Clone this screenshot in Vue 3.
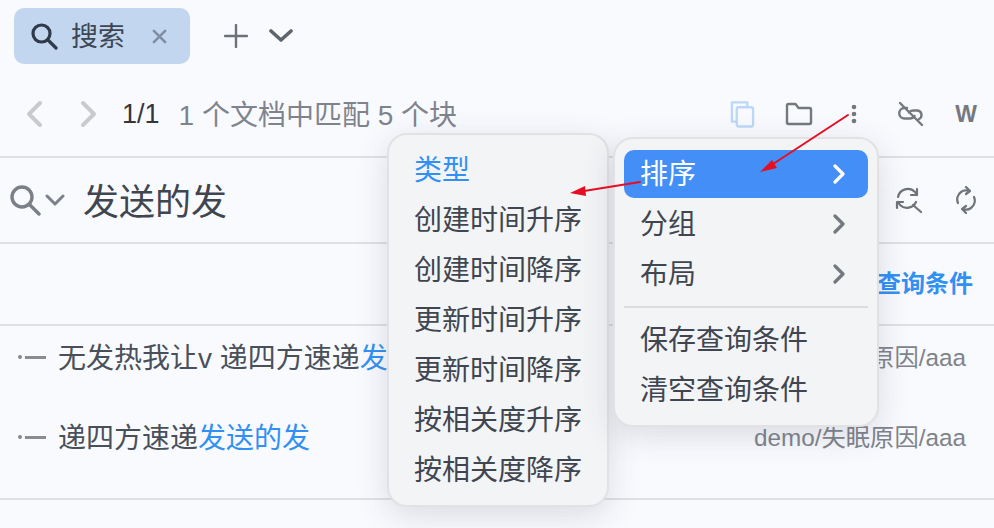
<template>
  <div class="page">
    <div class="tabbar">
      <div class="tab">
        <svg class="tab-search" viewBox="0 0 28 28"><circle cx="11.5" cy="11.5" r="8.5" /><path d="M18 18l8 8" /></svg>
        <span class="tab-title">搜索</span>
        <svg class="tab-close" viewBox="0 0 16 16"><path d="M2 2l12 12M14 2L2 14" /></svg>
      </div>
      <svg class="tab-add" viewBox="0 0 24 24"><path d="M12 1v22M1 12h22" /></svg>
      <svg class="tab-more" viewBox="0 0 24 16"><path d="M2 3l10 9 10-9" /></svg>
    </div>

    <div class="toolbar">
      <svg class="nav-arrow" viewBox="0 0 20 28"><path d="M16 3L5 14l11 11" /></svg>
      <svg class="nav-arrow next" viewBox="0 0 20 28"><path d="M4 3l11 11L4 25" /></svg>
      <span class="count">1/1</span>
      <span class="summary">1 个文档中匹配 5 个块</span>
      <div class="tools">
        <svg class="tool copy" viewBox="0 0 26 28"><path d="M6 22H2V2h16v4" /><rect x="7" y="7" width="17" height="20" rx="2" /></svg>
        <svg class="tool folder" viewBox="0 0 28 24"><path d="M2 3.500C2 2.500 2.500 2 3.500 2h7l3 4h11c1 0 1.500.5 1.500 1.500v13c0 1-.5 1.500-1.500 1.500h-21c-1 0-1.500-.5-1.500-1.500z" /></svg>
        <svg class="tool dots" viewBox="0 0 6 20"><circle cx="3" cy="3" r="2.300" /><circle cx="3" cy="10" r="2.300" /><circle cx="3" cy="17" r="2.300" /></svg>
        <svg class="tool unlink" viewBox="0 0 26 26"><path d="M9 7H6.500a5 5 0 0 0 0 10.500H12c2 0 3.500-1 4.500-2.500M11 11.500c1-1.500 2.500-2 4-2h4.500a4.500 4.500 0 0 1 1.500 8.500M2 2l22 22" /></svg>
        <span class="word">W</span>
      </div>
    </div>

    <div class="search-row">
      <svg class="query-icon" viewBox="0 0 32 32"><circle cx="13" cy="13" r="10" /><path d="M21 21l9 9" /></svg>
      <svg class="query-caret" viewBox="0 0 20 12"><path d="M2 2l8 8 8-8" /></svg>
      <span class="query">发送的发</span>
      <div class="row-tools">
        <svg class="refresh-search" viewBox="0 0 28 28"><path d="M3 11a10 10 0 0 1 17-5l2 3M22 3v6h-6M21 16a10 10 0 0 1-16 3l-2-3M2 22v-6h6M18 19l8 7" /></svg>
        <svg class="refresh" viewBox="0 0 24 28"><path d="M4 17a9 9 0 0 1 3-11c2-1.500 4-2 6-1.500M12 1l4 4-4 3M20 11a9 9 0 0 1-3 11c-2 1.500-4 2-6 1.500M12 27l-4-4 4-3" /></svg>
      </div>
    </div>

    <div class="filter-row"><span>查询条件</span></div>

    <div class="results">
      <div v-for="row in rows" :key="row.text" class="result">
        <i class="bullet"></i><i class="dash"></i>
        <span class="result-text">{{ row.text }}<em>{{ row.mark }}</em></span>
        <span class="path">demo/失眠原因/aaa</span>
      </div>
    </div>

    <div class="menu sort-menu">
      <div class="sort-head">类型</div>
      <div v-for="item in sortItems" :key="item" class="sort-item">{{ item }}</div>
    </div>

    <div class="menu main-menu">
      <div v-for="(item, i) in subItems" :key="item" class="menu-item" :class="{ active: i === 0 }">
        <span>{{ item }}</span>
        <svg viewBox="0 0 12 20"><path d="M2 2l8 8-8 8" /></svg>
      </div>
      <div class="divider"></div>
      <div v-for="item in actionItems" :key="item" class="menu-item">{{ item }}</div>
    </div>

    <svg class="arrows" viewBox="0 0 994 528">
      <path d="M848 115L770 166" />
      <polygon points="760,172 772,160 777,168" />
      <path d="M640 182L584 191" />
      <polygon points="570,193 585,186 586,196" />
    </svg>
  </div>
</template>

<script setup>
const rows = [
  { text: '无发热我让v 递四方速递', mark: '发送的发' },
  { text: '递四方速递', mark: '发送的发' }
]

const sortItems = [
  '创建时间升序',
  '创建时间降序',
  '更新时间升序',
  '更新时间降序',
  '按相关度升序',
  '按相关度降序'
]

const subItems = ['排序', '分组', '布局']
const actionItems = ['保存查询条件', '清空查询条件']
</script>

<style>
html, body {
  margin: 0;
  background: #f9fafe;
}
</style>

<style scoped>
.page {
  position: relative;
  width: 994px;
  height: 528px;
  overflow: hidden;
  background: #f9fafe;
  color: #3f4650;
  font-family: "Liberation Sans", "Noto Sans CJK SC", sans-serif;
  font-size: 28px;
}

svg {
  display: block;
  flex: none;
  fill: none;
  stroke-linecap: round;
  stroke-linejoin: round;
}

.tabbar {
  display: flex;
  align-items: center;
  height: 72px;
  box-sizing: border-box;
  padding: 8px 0 8px 14px;
}

.tab {
  display: flex;
  align-items: center;
  width: 176px;
  height: 56px;
  box-sizing: border-box;
  padding: 0 0 0 16px;
  border-radius: 10px;
  background: #c3d6ef;
}

.tab-search {
  width: 28px;
  height: 28px;
  stroke: #2f3a4a;
  stroke-width: 3.200;
}

.tab-title {
  margin-left: 13px;
  padding-bottom: 4px;
  font-size: 27px;
  color: #3d4754;
}

.tab-close {
  width: 15px;
  height: 15px;
  margin-left: 27px;
  stroke: #7e8ea3;
  stroke-width: 2.800;
}

.tab-add {
  width: 24px;
  height: 24px;
  margin-left: 34px;
  stroke: #6d7178;
  stroke-width: 2.400;
}

.tab-more {
  width: 24px;
  height: 16px;
  margin-left: 21px;
  stroke: #5f656d;
  stroke-width: 3.600;
}

.toolbar {
  display: flex;
  align-items: center;
  height: 86px;
  box-sizing: border-box;
  padding-left: 24px;
  border-bottom: 2px solid #dfe0e4;
}

.nav-arrow {
  width: 20px;
  height: 28px;
  stroke: #c9cacd;
  stroke-width: 4;
}

.nav-arrow.next {
  margin-left: 35px;
}

.count {
  margin-left: 23px;
  font-size: 27px;
  color: #33363c;
}

.summary {
  margin-left: 19px;
  padding-bottom: 3px;
  color: #7f848c;
}

.tools {
  display: flex;
  align-items: center;
  margin-left: auto;
  padding-right: 17px;
}

.tool {
  stroke: #74787f;
  stroke-width: 2.400;
}

.copy {
  width: 25px;
  height: 28px;
  stroke: #bcd7f7;
}

.folder {
  width: 28px;
  height: 24px;
  margin-left: 30px;
}

.dots {
  width: 6px;
  height: 20px;
  margin-left: 38px;
  fill: #74787f;
  stroke: none;
}

.unlink {
  width: 26px;
  height: 26px;
  margin-left: 41px;
}

.word {
  margin-left: 31px;
  font-size: 23px;
  font-weight: 700;
  color: #74787f;
}

.search-row {
  display: flex;
  align-items: center;
  height: 86px;
  box-sizing: border-box;
  padding-left: 9px;
  border-bottom: 2px solid #dfe0e4;
}

.query-icon {
  width: 32px;
  height: 32px;
  stroke: #7b8088;
  stroke-width: 3.400;
}

.query-caret {
  width: 20px;
  height: 12px;
  margin-left: 4px;
  stroke: #7b8088;
  stroke-width: 3;
}

.query {
  margin-left: 18px;
  padding-bottom: 3px;
  font-size: 36px;
  color: #3f4650;
}

.row-tools {
  display: flex;
  align-items: center;
  margin-left: auto;
  padding-right: 16px;
}

.refresh-search,
.refresh {
  stroke: #6f737a;
  stroke-width: 2.200;
}

.refresh-search {
  width: 28px;
  height: 28px;
}

.refresh {
  width: 24px;
  height: 28px;
  margin-left: 31px;
}

.filter-row {
  display: flex;
  align-items: center;
  justify-content: flex-end;
  height: 82px;
  box-sizing: border-box;
  padding: 0 21px 6px 0;
  border-bottom: 2px solid #dfe0e4;
  font-size: 24px;
  font-weight: 700;
  color: #3290f3;
}

.results {
  height: 174px;
  box-sizing: border-box;
  padding-top: 9px;
  border-bottom: 2px solid #dfe0e4;
}

.result {
  display: flex;
  align-items: center;
  height: 44px;
  margin-bottom: 36px;
  padding: 0 28px 0 18px;
}

.bullet {
  width: 4px;
  height: 4px;
  border-radius: 50%;
  background: #85888f;
}

.dash {
  width: 21px;
  height: 3px;
  margin-left: 3px;
  background: #8a8c92;
}

.result-text {
  margin-left: 12px;
  padding-bottom: 3px;
  font-size: 28px;
  color: #4a5059;
  white-space: nowrap;
}

.result-text em {
  font-style: normal;
  color: #3290f3;
}

.path {
  margin-left: auto;
  padding-bottom: 4px;
  font-size: 24.3px;
  color: #7f848c;
  white-space: nowrap;
}

.menu {
  position: absolute;
  box-sizing: border-box;
  border: 2px solid #e2e2e4;
  border-radius: 20px;
  background: #f3f4f6;
  box-shadow: 0 8px 32px rgba(60, 64, 80, 0.16);
}

.sort-menu {
  left: 387px;
  top: 133px;
  width: 222px;
  height: 374px;
  padding: 11px 0 0 25px;
}

.sort-head,
.sort-item {
  height: 50px;
  line-height: 50px;
  white-space: nowrap;
}

.sort-head {
  color: #3290f3;
}

.main-menu {
  left: 613px;
  top: 137px;
  width: 266px;
  height: 290px;
  padding: 11px 9px 0;
}

.menu-item {
  display: flex;
  align-items: center;
  justify-content: space-between;
  height: 50px;
  box-sizing: border-box;
  padding: 0 23px 4px 16px;
  border-radius: 10px;
  white-space: nowrap;
}

.menu-item.active {
  height: 48px;
  margin-bottom: 1px;
  background: #448ef7;
  color: #fff;
}

.menu-item svg {
  width: 12px;
  height: 20px;
  margin-top: 4px;
  stroke: #74787f;
  stroke-width: 3.200;
}

.menu-item.active svg {
  stroke: #fff;
}

.divider {
  height: 2px;
  margin: 7px 0 7px;
  background: #dcdcde;
}

.arrows {
  position: absolute;
  left: 0;
  top: 0;
  width: 994px;
  height: 528px;
  pointer-events: none;
}

.arrows path {
  stroke: #e60e22;
  stroke-width: 2;
}

.arrows polygon {
  fill: #e60e22;
}
</style>
